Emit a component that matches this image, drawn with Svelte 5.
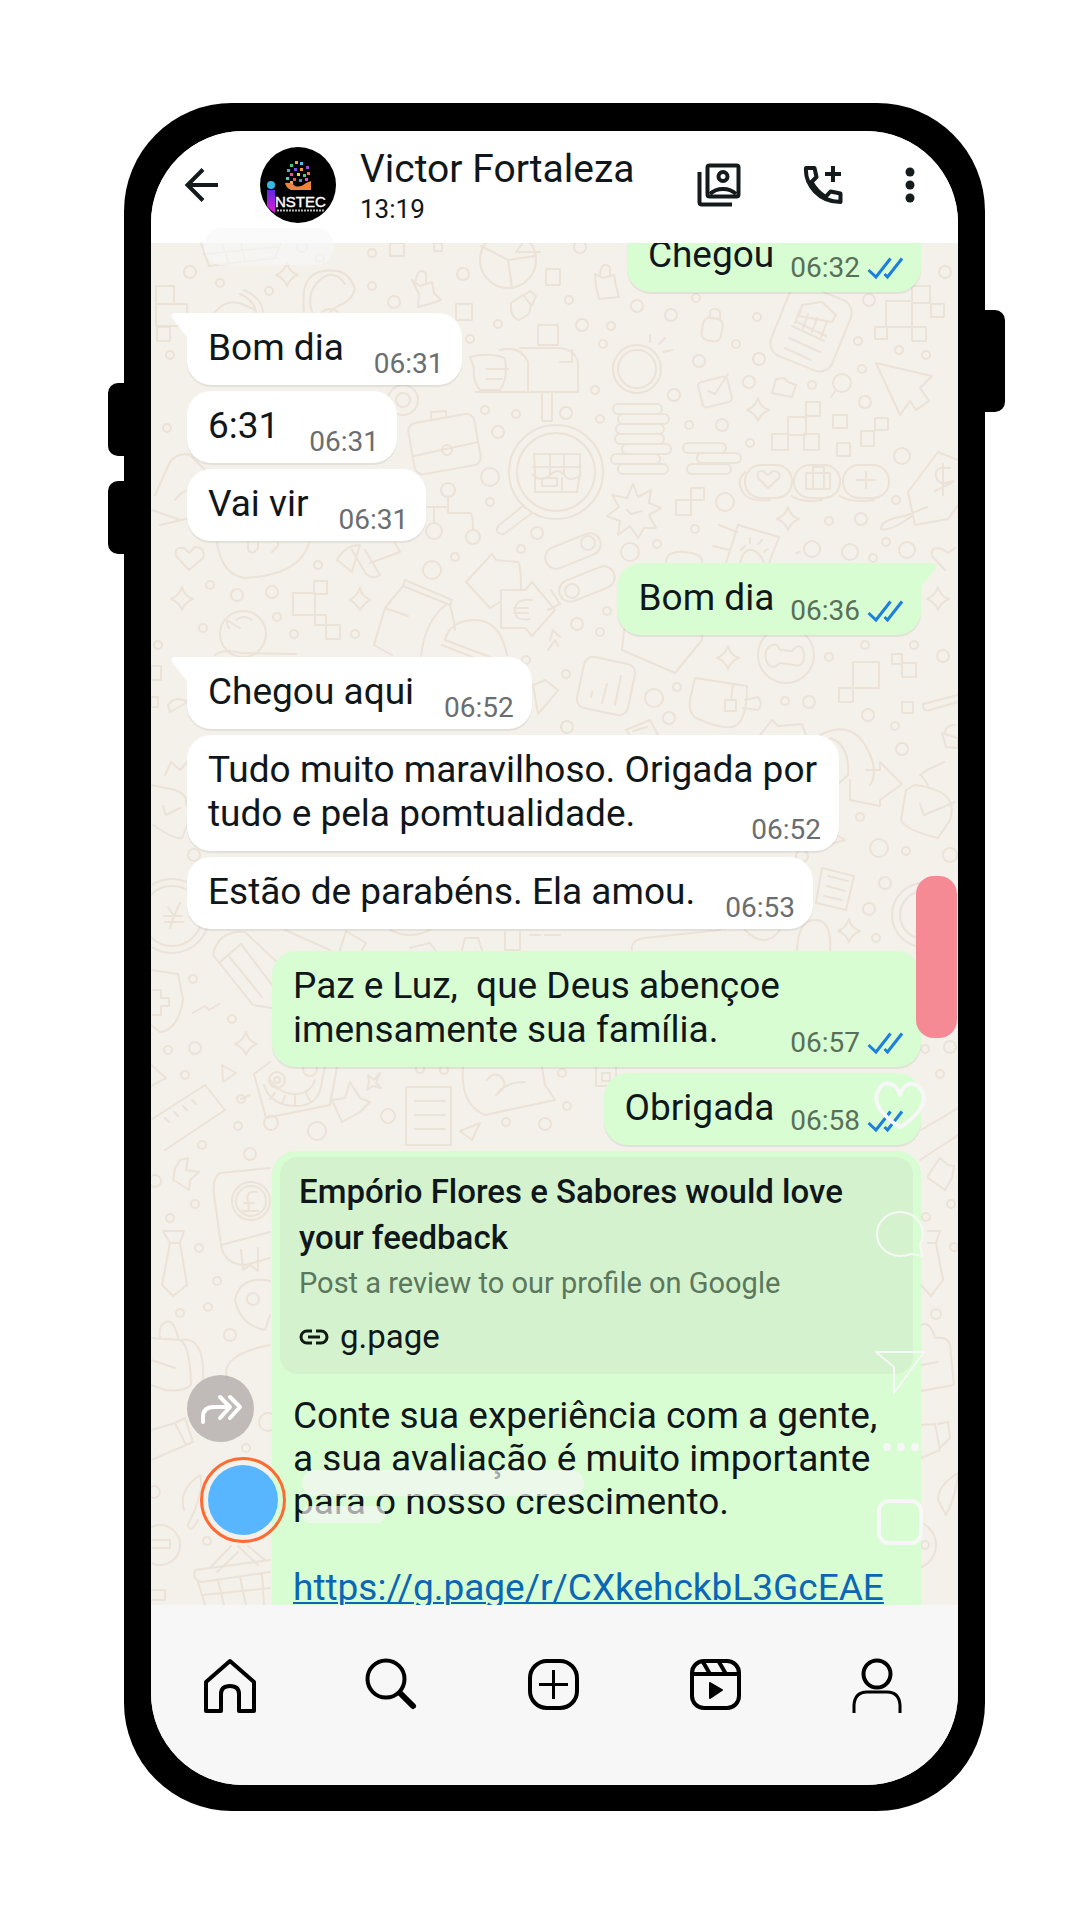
<script>
  const messages = [
    { side: 'out', last: 'Chegou', time: '06:32', first: true },
    { side: 'in', last: 'Bom dia', time: '06:31', tail: true },
    { side: 'in', last: '6:31', time: '06:31' },
    { side: 'in', last: 'Vai vir', time: '06:31' },
    { side: 'out', last: 'Bom dia', time: '06:36', tail: true },
    { side: 'in', last: 'Chegou aqui', time: '06:52', tail: true },
    { side: 'in', head: 'Tudo muito maravilhoso. Origada por', last: 'tudo e pela pomtualidade.', time: '06:52' },
    { side: 'in', last: 'Estão de parabéns. Ela amou.', time: '06:53' },
    { side: 'out', head: 'Paz e Luz,  que Deus abençoe', last: 'imensamente sua família.', time: '06:57', gap: true, wide: true },
    { side: 'out', last: 'Obrigada', time: '06:58' }
  ];

  const review = 'Conte sua experiência com a gente,\na sua avaliação é muito importante\npara o nosso crescimento.\n\n';

  // Wallpaper doodles: [x, y, radius]
  const rings = [
    [190,272,6],[220,283,4],[269,291,4],[372,253,4],[394,302,6],[372,286,4],[463,274,6],[498,324,4],[470,339,4],[170,355,4],[320,258,4],[302,247,5],
    [580,247,6],[569,300,4],[637,306,6],[671,315,6],[582,325,6],[611,326,4],[603,344,4],[696,298,4],[757,317,4],[736,344,4],[699,361,6],[759,359,6],[749,382,6],
    [812,385,4],[862,369,4],[858,341,4],[899,350,4],[926,355,4],[869,300,6],[945,272,6],[865,402,6],[595,390,4],[566,413,6],[600,419,4],[674,395,6],[637,369,24],[637,369,19],
    [689,425,4],[722,425,6],[842,383,9],[485,410,4],[516,414,4],[403,400,15],[403,400,7],[498,432,6],[490,477,9],[448,490,7],[434,531,8],[473,537,7],[490,502,4],
    [455,557,4],[432,570,9],[537,533,6],[521,549,4],[318,565,4],[210,585,4],[237,595,6],[272,592,6],[277,617,4],[203,628,4],[294,634,4],[355,634,4],[158,645,4],[243,634,23],
    [526,660,4],[167,428,4],[556,472,47],[556,472,39],[750,443,4],[902,456,8],[896,500,4],[861,519,6],[829,521,4],[725,502,9],[695,529,4],[657,544,4],[630,552,9],
    [812,549,8],[850,552,8],[907,550,8],[886,542,4],[873,558,4],[588,543,7],[572,591,7],[607,611,4],[577,624,6],[600,632,4],[566,674,4],[654,698,9],
    [677,687,4],[669,718,6],[567,727,6],[785,701,4],[809,702,6],[829,657,4],[865,645,4],[914,645,4],[943,656,6],[868,715,6],[895,726,4],[902,749,6],
    [786,655,28],[860,817,4],[879,848,9],[906,851,4],[950,855,7],[802,856,6],[885,883,6],[869,909,6],[876,938,4],[924,915,32],[924,915,24],[194,855,6],
    [172,916,37],[172,916,30],[193,979,4],[232,1019,4],[168,1050,4],[195,1048,6],[185,1075,4],[241,1099,4],[271,1123,7],[317,1131,9],[388,1116,7],[238,1126,4],
    [277,1080,8],[277,1080,3],[310,1069,7],[420,1069,4],[444,1070,4],[506,1122,4],[545,1124,6],[562,1073,4],[567,1106,4],[545,1163,4],[925,1049,4],[940,1074,4],[950,1047,6],
    [250,1154,6],[202,1145,4],[155,1181,6],[195,1204,4],[170,1218,4],[199,1248,4],[217,1281,4],[208,1307,4],[180,1313,4],[230,1335,6],[251,1201,19],[251,1201,15],[253,1299,6],
    [246,1448,4],[207,1541,4],[154,1492,6],[160,1545,20],[268,1422,9],[951,1204,4],[936,1314,5],[954,1247,4],[926,1217,4],[912,1545,24],[925,1545,4]
  ];
  // [x, y, width, height]
  const boxes = [
    [390,243,14,13],[156,286,18,18],[156,304,31,22],[157,327,13,14],[434,243,8,8],[456,304,16,16],[538,325,20,20],[546,269,14,16],
    [886,301,26,26],[912,286,18,17],[912,327,14,14],[931,304,13,13],[875,327,12,12],
    [788,417,18,18],[806,402,14,14],[833,415,14,13],[772,434,16,16],[804,434,15,16],[875,418,13,12],[861,431,13,15],[837,443,13,13],
    [676,500,15,15],[691,488,13,12],[293,593,22,22],[314,581,13,13],[315,615,11,10],[326,625,14,14],[151,666,10,14],[151,697,7,10],
    [853,662,26,26],[839,688,14,14],[892,654,10,10],[902,663,14,14],[902,702,11,11],[596,1066,20,20],[602,1073,8,8]
  ];
  const books = [
    [613,404,49],[618,414,51],[616,424,48],[615,434,49],[622,444,49],[611,454,49],[618,464,50],
    [683,443,43],[697,453,44],[687,464,44]
  ];
  const sparkles = [[287,275],[758,410],[182,599],[360,600],[788,519],[938,599],[728,658],[849,931],[246,1044]];

  const nav = ['home', 'search', 'create', 'reels', 'profile'];
  const navLabels = { home: 'Início', search: 'Pesquisar', create: 'Criar', reels: 'Reels', profile: 'Perfil' };
</script>

{#snippet ticks()}
  <svg class="ticks" viewBox="0 0 36 24" aria-hidden="true">
    <path d="M1.500 14L9 21L23.500 2.500M17.500 18L20.500 21L35 2.500" />
  </svg>
{/snippet}

<main class="page">
  <div class="phone">
    <span class="key key-up"></span>
    <span class="key key-down"></span>
    <span class="key key-power"></span>

    <div class="screen">
      <header class="top">
        <button class="icon-btn back" aria-label="Voltar">
          <svg width="36" height="36" viewBox="0 0 36 36"><path d="M34 18H4M19 2.500L3.500 18L19 33.500" fill="none" stroke="#151a1c" stroke-width="4" /></svg>
        </button>
        <svg class="avatar" viewBox="0 0 76 76" role="img" aria-label="INSTEC">
          <defs>
            <linearGradient id="stem" x1="0" y1="0" x2="0" y2="1">
              <stop offset="0" stop-color="#5a2be0" /><stop offset="1" stop-color="#e619d8" />
            </linearGradient>
          </defs>
          <circle cx="38" cy="38" r="38" fill="#000" />
          <g>
            <rect x="35" y="14" width="3" height="3" fill="#f3a53a" /><rect x="40" y="15" width="3" height="3" fill="#47c6e8" />
            <rect x="30" y="17" width="3" height="3" fill="#4bc48a" /><rect x="46" y="19" width="3" height="3" fill="#a04be0" />
            <rect x="27" y="22" width="3" height="3" fill="#38b3df" /><rect x="34" y="21" width="3" height="3" fill="#7b4de8" />
            <rect x="40" y="21" width="3" height="3" fill="#f0a330" /><rect x="47" y="25" width="3" height="3" fill="#ef7b3b" />
            <rect x="30" y="26" width="3" height="3" fill="#e8567c" /><rect x="37" y="26" width="3" height="3" fill="#f3d63a" />
            <rect x="43" y="27" width="3" height="3" fill="#58cf62" /><rect x="26" y="30" width="3" height="3" fill="#54d0b8" />
            <rect x="33" y="31" width="3" height="3" fill="#ee5454" /><rect x="39" y="32" width="3" height="3" fill="#4e8cf0" />
            <rect x="45" y="31" width="3" height="3" fill="#e44ed0" /><rect x="30" y="34" width="3" height="3" fill="#f3a53a" />
          </g>
          <path d="M25 36Q31 35 35 39Q40 41 46 36L51 34V43H31Q26 41 25 36Z" fill="#ee8340" />
          <circle cx="11" cy="38" r="4" fill="#35b9e8" />
          <path d="M7 43H15V66Q11 64 7 59Z" fill="url(#stem)" />
          <text x="15" y="60" class="logo-text">NSTEC</text>
          <path d="M17 63.500H64" stroke="#b9b9b9" stroke-width="2" stroke-dasharray="2 1" />
        </svg>
        <div class="who">
          <h1>Victor Fortaleza</h1>
          <p>13:19</p>
        </div>
        <div class="actions">
          <button class="icon-btn" aria-label="Contato">
            <svg width="44" height="44" viewBox="0 0 44 44" fill="none" stroke="#151a1c" stroke-width="4">
              <rect x="10.500" y="2.500" width="31" height="31" rx="2" />
              <path d="M2.500 9V39Q2.500 41.500 5 41.500H35" />
              <circle cx="26" cy="13.500" r="4.500" />
              <path d="M13 31Q18 26 26 26T39 31" />
            </svg>
          </button>
          <button class="icon-btn" aria-label="Ligar">
            <svg width="40" height="40" viewBox="0 0 40 40" fill="none" stroke="#151a1c" stroke-width="4" stroke-linejoin="round">
              <path d="M3 3H11.500L13.500 12L8.500 17Q13.500 26.500 22.500 32L27.500 26.500L37.500 28.500V37Q22 37 12 26.500T3 3Z" />
              <path d="M30 1V17M22 9H38" />
            </svg>
          </button>
          <button class="icon-btn" aria-label="Mais opções">
            <svg width="10" height="36" viewBox="0 0 10 36" fill="#151a1c"><circle cx="5" cy="5" r="4.500" /><circle cx="5" cy="18" r="4.500" /><circle cx="5" cy="31" r="4.500" /></svg>
          </button>
        </div>
      </header>

      <section class="chat" aria-label="Conversa">
        <svg class="doodles" viewBox="151 243 807 1362" preserveAspectRatio="xMinYMin slice" aria-hidden="true">
          {#each rings as [x, y, r]}<circle cx={x} cy={y} {r} />{/each}
          {#each boxes as [x, y, w, h]}<rect {x} {y} width={w} height={h} />{/each}
          {#each books as [x, y, w]}<rect {x} {y} width={w} height="10" rx="5" />{/each}
          {#each sparkles as [x, y]}
            <path transform="translate({x} {y})" d="M0-12Q2-3 11 0Q3 3 0 11Q-3 3-11 0Q-3-3 0-12Z" />
          {/each}
          <!-- basket, taco, wifi, pie, locks -->
          <path d="M201 243L209 266L275 258L281 243M222 243L229 264M241 243L245 261M204 254L278 247" />
          <path d="M304 312Q302 292 306 284Q312 268 338 271Q350 274 355 289Q352 301 338 306L330 312M312 312Q306 292 320 280T345 284M322 312Q330 306 338 312" />
          <path d="M215 312Q227 298 242 304T256 312M240 294Q254 300 256 312M244 290Q262 298 263 312" />
          <circle cx="508" cy="260" r="28" /><path d="M481 246L508 260L512 288M508 260L535 256M516 252L523 243M516 252H540" />
          <path d="M412 280L420 286L432 282L434 293L441 300L429 304L418 307L419 294ZM416 280Q418 267 426 273V282" />
          <path d="M511 303L523 295L531 305L529 314L519 320Q510 318 511 303ZM524 295L530 291L536 296L532 305" />
          <path d="M595 274L603 278L614 275L616 286L619 297L599 299L596 286ZM600 274Q602 260 610 267V275" />
          <rect x="702" y="318" width="20" height="23" rx="7" transform="rotate(10 712 330)" /><path d="M710 318V311Q716 306 720 312V320" />
          <!-- bank card, cursor, coin rays -->
          <rect x="778" y="290" width="66" height="76" rx="14" transform="rotate(22 811 328)" />
          <path d="M799 316L802 305L822 302L836 315L832 322ZM797 322L826 336M792 326L824 341M800 309L795 323M808 314L803 328M817 318L812 332M827 322L821 337M789 338L820 352M785 348L811 360" />
          <path d="M876 363L932 376L920 388L929 401L916 410L910 401L900 415Z" />
          <path d="M650 342V335M659 344L665 338M663 352L672 350" />
          <rect x="700" y="379" width="30" height="26" rx="4" transform="rotate(-14 715 392)" /><path d="M708 391L715 394L728 374" />
          <path d="M772 393L776 379L784 378L788 382L796 385L792 397ZM835 391L831 397" />
          <!-- mailbox and speech bubble -->
          <path d="M470 357Q490 352 505 358Q508 380 500 390H480Q472 380 474 368ZM486 369H508M486 379H502M500 350Q520 345 528 362V392H475M520 348H560Q575 350 578 362V392H528M542 393V421H552V393M560 362H572V350" />
          <!-- briefcase, nodes, store lens -->
          <rect x="411" y="418" width="67" height="52" rx="8" transform="rotate(-10 445 444)" /><path d="M414 456L478 442M431 418V412L446 411V415" /><circle cx="447" cy="450" r="5" />
          <path d="M448 498V513H470Q473 513 473 530M425 507H448M434 507V523" />
          <path d="M534 454H580V473L577 492H535V474ZM533 467H581M550 454V474M564 454V474M533 475Q542 483 550 475T564 475T581 475M542 478H557V486H542ZM562 478V492M524 505L498 526Q494 534 504 534L532 513" />
          <path d="M633 484L638 497L651 490L649 503L661 508L649 515L656 528L644 528L638 538L630 526L618 535L620 521L607 516L619 507L612 495L627 498ZM627 510L631 514L642 511" />
          <!-- reaction pills -->
          <rect x="745" y="465" width="47" height="33" rx="16" /><rect x="794" y="465" width="46" height="33" rx="16" /><rect x="843" y="465" width="46" height="33" rx="16" />
          <path d="M745 472Q735 482 744 494Q750 502 770 500M792 496Q800 503 822 500M840 496Q850 503 874 500M768 488L758 478Q756 470 763 471L768 475L773 471Q781 471 779 478ZM806 473H830V489H806ZM813 473V467H824V473M813 473V489M824 473V489M866 472V488M857 480H875" />
          <path d="M958 460L938 452L908 492L915 525L948 519L958 505M950 468Q934 466 936 476T950 482T935 491M943 464V495M927 507L905 516Q880 520 881 529Q890 532 912 516" />
          <!-- toggles, paw card, scribbles -->
          <rect x="544" y="540" width="58" height="22" rx="11" transform="rotate(-22 573 551)" /><rect x="558" y="573" width="58" height="22" rx="11" transform="rotate(-22 587 584)" />
          <path d="M726 563L738 525L779 537L769 563M713 546L730 550M719 525L737 532M740 563Q744 548 752 550T764 563M741 550L745 546M750 543V538M758 544L762 540M764 552L768 549M800 552L796 553M666 563Q666 550 685 552T702 563" />
          <path d="M189 570L176 556Q174 546 184 548L189 553L195 547Q206 547 203 558ZM945 570L932 556Q930 546 942 549L948 553L955 548" />
          <path d="M155 495L170 462Q178 452 190 455L205 470M160 525L190 518M152 510L180 520M175 500Q190 480 205 500" />
          <path d="M217 543Q222 575 245 578Q300 575 309 543M248 543V550Q253 556 258 548V543M272 552Q280 545 278 543M337 560Q345 545 360 545L352 572ZM365 550L380 575Q374 580 366 574L352 550M395 543L400 552L370 563" />
          <path d="M466 582L492 554L496 560L518 562Q521 565 521 590M466 582L490 608L500 602M501 590H525L532 582L555 610L532 636L525 628H501ZM532 600Q515 598 515 610T530 619M514 608H528M514 613H528" />
          <path d="M405 580L452 600L450 605L403 586ZM403 586L385 608L374 645L392 655M385 608L408 616M450 605Q454 620 455 630M447 604Q425 620 421 656M445 640Q450 620 475 620T507 655M445 640L490 657M442 645L480 660" />
          <path d="M229 628Q224 618 230 622T240 628M236 620Q244 614 252 620M215 655Q225 648 240 653L296 654M548 650L555 640L558 646M548 610L560 604L551 590" />
          <path d="M624 630L622 650L675 673L702 640V634M550 640L553 630L560 637" />
          <rect x="580" y="660" width="52" height="52" rx="9" transform="rotate(12 606 686)" /><path d="M591 697L592 692M602 703L607 684M615 705L621 676" />
          <path d="M695 678L747 686Q747 715 738 724T696 718Q688 712 690 700ZM745 700L758 697Q764 704 758 710L743 708M733 684L731 700M725 700H736V711H725ZM626 730L650 720L658 735M626 730L630 735M633 731L647 727" />
          <path d="M768 648Q776 640 780 650L792 651Q802 640 804 655Q804 668 794 665L780 663Q770 672 766 660Q764 652 768 648Z" />
          <path d="M923 704L958 695M923 704Q922 712 930 710L958 702M945 733Q945 725 955 725M942 733L958 738V748L946 747ZM168 705Q175 695 188 702L170 712ZM533 685L545 680L558 690L550 700L538 714ZM760 735L772 720L778 726L802 724L806 735" />
          <path d="M820 735Q850 720 865 745T870 785M830 738Q850 745 848 775L838 784M850 780V800L880 806V800L902 784L880 762V770H866M812 850L845 840L828 830" />
          <path d="M920 775L927 770L944 762M921 775L928 785M906 790L914 785Q960 790 950 820L938 838Q905 830 901 820ZM920 804L924 815L955 802" />
          <path d="M822 868L854 876L846 910L816 903ZM828 876L848 881M827 886L845 891M824 896L842 900" />
          <path d="M151 785L175 790Q188 794 186 805M153 825Q175 840 182 838L189 820M163 806L166 815L180 808M165 775L171 762L180 770L187 762" />
          <!-- pencil, shield, ruler, robot -->
          <path d="M213 955Q218 930 245 932L280 965M213 955L253 1005L272 1008M228 955L262 997M241 944L272 985M220 962L241 944" />
          <path d="M151 970L178 974L183 1000Q178 1030 160 1032L151 1025M153 990H161V998H169V1006H161V1015H153M193 1013L205 1006L209 1010L219 1004M168 907L174 916L180 903M164 916H182M165 922H183M174 916L170 928" />
          <path d="M222 1065L236 1073L223 1082ZM151 1065L166 1078L151 1086M151 1120L205 1085L225 1110L165 1150M165 1118L169 1122M174 1112L178 1116M183 1106L187 1110M192 1100L196 1104" />
          <path d="M254 1074L270 1062M254 1074L266 1118L330 1105L337 1067M264 1085Q270 1105 295 1106T322 1080L325 1067M270 1080Q280 1094 295 1094T315 1080M275 1093L270 1099M285 1096L282 1104M295 1096V1105M306 1093L310 1101M241 1099L250 1095" />
          <path d="M350 1082L360 1098L370 1102L360 1112L342 1122L332 1100L345 1098ZM368 1075L374 1080L380 1073L376 1083L381 1088L373 1086L367 1090L369 1082Z" />
          <path d="M406 1087H451V1145H406ZM415 1101H445M415 1115H445M415 1129H445M463 1067Q460 1105 485 1115L555 1100L545 1085L542 1067M487 1080Q495 1070 502 1078T496 1095Q505 1082 525 1082M460 1131L480 1123L472 1140Z" />
          <path d="M285 930L330 950M340 950L346 931L366 943L362 950M390 930Q410 940 430 930M410 948L430 943L435 950M462 950L465 938H478L482 950M505 932V950H520V932M530 935H540M545 935H560M632 950Q630 940 645 938L720 930M745 930Q765 950 780 930M797 950Q798 920 815 920T830 950" />
          <!-- books, tie, pin, backpack -->
          <path d="M270 1168L220 1173Q212 1178 214 1195L221 1245Q225 1265 245 1265L270 1258M221 1245L270 1232M241 1250L243 1270L250 1265L258 1271L258 1248M257 1192Q245 1190 248 1202T243 1211H258M244 1203H254" />
          <path d="M163 1231H184L180 1243H170ZM170 1243L162 1285L173 1296L187 1285L180 1243M270 1281Q240 1275 235 1300Q240 1325 265 1330L270 1315M175 1168L180 1160L188 1158L186 1170L199 1172L190 1180L189 1190L180 1184L173 1180Z" />
          <path d="M151 1338L180 1340Q190 1345 191 1385Q185 1392 165 1390L151 1385M160 1338Q158 1325 166 1322T178 1338M151 1360L175 1368M180 1340Q205 1335 203 1380M227 1378Q220 1355 270 1345" />
          <path d="M151 1430L175 1423L186 1445L151 1460M175 1423L185 1418L193 1442L186 1445M184 1510Q178 1490 200 1475Q205 1490 188 1525M188 1525Q190 1535 198 1520M151 1548H170V1540H151M210 1568L231 1546M217 1572L238 1552M238 1546L258 1565M248 1546L265 1560" />
          <path d="M195 1570L270 1560M195 1570Q192 1580 202 1582L270 1572M198 1582L205 1605M218 1580L224 1605M240 1577L246 1605M262 1573L264 1605M203 1595L270 1588M151 1590H165V1600H151" />
          <path d="M928 1231H940L936 1243H928M936 1243L943 1280L931 1296L921 1285M928 1176L935 1165L940 1158L948 1165L954 1166L952 1178L945 1190L928 1178M921 1325Q930 1320 935 1338Q948 1336 950 1345L954 1385L921 1391M921 1365L938 1362M921 1425L935 1424L940 1450L921 1458M938 1424L948 1422L950 1438L940 1448M958 1473Q938 1485 938 1500L946 1515Q956 1495 958 1475M920 1160L958 1135M921 1130L958 1108" />
        </svg>

        <ol class="messages">
          {#each messages as m}
            <li class="bubble {m.side}" class:tail={m.tail} class:gap={m.gap} class:first={m.first} class:wide={m.wide}>
              <p class="lines">{#if m.head}<span class="text head">{m.head}</span>{/if}<span class="text last">{m.last}</span></p>
              <span class="meta"><time>{m.time}</time>{#if m.side === 'out'}{@render ticks()}{/if}</span>
            </li>
          {/each}
          <li class="bubble out wide card">
            <div class="preview">
              <h2>Empório Flores e Sabores would love<br />your feedback</h2>
              <p class="sub">Post a review to our profile on Google</p>
              <p class="host">
                <svg width="30" height="16" viewBox="0 0 30 16" fill="none" stroke="#101a14" stroke-width="3" aria-hidden="true"><path d="M13 2H8A6 6 0 0 0 8 14H13M17 2H22A6 6 0 0 1 22 14H17M9 8H21" /></svg>
                g.page
              </p>
            </div>
            <p class="text review">{review}<a href="https://g.page/r/CXkehckbL3GcEAE">https://g.page/r/CXkehckbL3GcEAE</a></p>
          </li>
        </ol>

        <button class="forward" aria-label="Encaminhar">
          <svg width="44" height="32" viewBox="0 0 44 32" fill="none" stroke="#fff" stroke-width="4" stroke-linecap="round" stroke-linejoin="round"><path d="M4 29V24Q4 14 15 14H29M21 4L31 14L21 25M31 4L41 14L31 25" /></svg>
        </button>
        <span class="story"></span>
        <span class="ghost ghost-a"></span>
        <span class="ghost ghost-b"></span>
        <span class="marker"></span>

        <div class="rail">
          <button class="icon-btn" aria-label="Curtir">
            <svg width="52" height="48" viewBox="0 0 52 48" stroke-width="4"><path d="M26 46Q18 42 8 31Q-1 20 4 10T16 3Q23 4 26 14Q29 4 36 3T48 10Q53 20 44 31Q34 42 26 46Z" /></svg>
          </button>
          <button class="icon-btn comment" aria-label="Comentar">
            <svg width="52" height="48" viewBox="0 0 52 48" stroke-width="2"><path d="M48 47L37 45Q32 47 26 47A23 22 0 1 1 49 25Q49 30 46 35Z" /></svg>
          </button>
          <button class="icon-btn send" aria-label="Enviar">
            <svg width="52" height="46" viewBox="0 0 52 46" stroke-width="2"><path d="M2 2H50L20 43V17Z" /></svg>
          </button>
          <button class="icon-btn more" aria-label="Mais">
            <svg width="52" height="10" viewBox="0 0 52 10"><g fill="#f7f7f7" stroke="none"><circle cx="13" cy="5" r="4" /><circle cx="27" cy="5" r="4" /><circle cx="41" cy="5" r="4" /></g></svg>
          </button>
          <button class="icon-btn sound" aria-label="Áudio">
            <svg width="52" height="48" viewBox="0 0 52 48" stroke-width="4"><rect x="5" y="3" width="42" height="42" rx="10" /></svg>
          </button>
        </div>
      </section>
      <span class="ghost ghost-top"></span>

      <nav class="bottom" aria-label="Principal">
        {#each nav as id}
          <button class="icon-btn" aria-label={navLabels[id]}>
            <svg width="56" height="56" viewBox="0 0 56 56" fill="none" stroke="#000" stroke-width="4" stroke-linejoin="round">
              {#if id === 'home'}
                <path d="M26 4L50 25V54H35V37Q35 29 26 29T17 37V54H2V25Z" />
              {:else if id === 'search'}
                <circle cx="21" cy="22" r="18.500" /><path d="M35 36L48 49" stroke-width="6" stroke-linecap="round" />
              {:else if id === 'create'}
                <rect x="4" y="4" width="47" height="47" rx="17" /><path d="M13 27.500H42M27.500 13V42" stroke-width="3" />
              {:else if id === 'reels'}
                <rect x="4" y="4" width="47" height="47" rx="12" /><path d="M4 17H51M15 5L22 17M31 5L38 17" /><path d="M22 26L34 33L22 41Z" fill="#000" stroke-width="2" />
              {:else}
                <circle cx="28" cy="17" r="13.500" /><path d="M5 56V48Q6 35 18 35H38Q50 35 51 48V56" stroke-width="3" />
              {/if}
            </svg>
          </button>
        {/each}
      </nav>
    </div>
  </div>
</main>

<style>
  :global(body) { background: #fff; }
  * { box-sizing: border-box; }
  h1, h2, p, ol { margin: 0; padding: 0; font-weight: 400; }
  .page {
    padding: 103px 95px 109px 124px;
    font-family: Roboto, "Noto Sans", sans-serif;
    color: #10171a;
  }
  .phone {
    position: relative;
    padding: 28px 27px 26px;
    background: #000;
    border-radius: 108px;
  }
  .key { position: absolute; background: #000; }
  .key-up, .key-down { left: -16px; width: 20px; height: 73px; border-radius: 10px 0 0 10px; }
  .key-up { top: 280px; }
  .key-down { top: 378px; }
  .key-power { right: -20px; top: 207px; width: 24px; height: 102px; border-radius: 0 10px 10px 0; }
  .screen {
    position: relative;
    overflow: hidden;
    border-radius: 92px;
    background: #f7f7f7;
  }
  .icon-btn {
    display: flex;
    align-items: center;
    justify-content: center;
    padding: 0;
    border: 0;
    background: none;
  }
  .top {
    display: flex;
    align-items: center;
    height: 112px;
    padding: 0 43px 4px 33px;
    background: #fff;
  }
  .avatar { width: 76px; height: 76px; margin-left: 40px; flex: none; }
  .logo-text { font: 15px "Liberation Sans", sans-serif; fill: #fff; stroke: #fff; stroke-width: 0.4; }
  .who { margin-left: 24px; flex: 1; }
  .who h1 { font-size: 39px; line-height: 48px; }
  .who p { font-size: 26px; line-height: 32px; }
  .actions { display: flex; align-items: center; gap: 62px; }
  .chat {
    position: relative;
    height: 1362px;
    overflow: hidden;
    background: #f4f1ea;
  }
  .doodles {
    position: absolute;
    inset: 0;
    width: 100%;
    height: 100%;
    fill: none;
    stroke: #ebe2d8;
    stroke-width: 2;
    stroke-linejoin: round;
    stroke-linecap: round;
  }
  .messages {
    position: relative;
    display: flex;
    flex-direction: column;
    gap: 6px;
    padding: 0 37px 0 36px;
    list-style: none;
  }
  .bubble {
    position: relative;
    display: grid;
    grid-template-columns: auto auto;
    padding: 13px 18px 7px 21px;
    border-radius: 24px;
    box-shadow: 0 2px 1px #00000012;
  }
  .in { align-self: flex-start; column-gap: 30px; background: #fff; }
  .out { align-self: flex-end; column-gap: 16px; background: #d8fdd2; }
  .first { margin-top: -23px; margin-bottom: -1px; }
  .tail, .gap { margin-top: 16px; }
  .in.tail { border-top-left-radius: 0; }
  .out.tail { border-top-right-radius: 0; }
  .tail::before {
    content: "";
    position: absolute;
    top: 0;
    width: 16px;
    height: 24px;
    background: inherit;
  }
  .in.tail::before { right: 100%; clip-path: path("M3 0H16V24L1 5Q-1 1 3 0Z"); }
  .out.tail::before { left: 100%; clip-path: path("M13 0H0V24L15 5Q17 1 13 0Z"); }
  .lines { display: contents; }
  .text { font-size: 37px; line-height: 44px; white-space: pre-wrap; }
  .head { grid-column: 1 / -1; padding-right: 4px; }
  .last { padding-bottom: 8px; }
  .meta {
    display: flex;
    align-items: center;
    justify-self: end;
    align-self: end;
    gap: 7px;
    font-size: 28px;
    line-height: 28px;
    color: #6a6e70;
  }
  .out .meta { padding-bottom: 3px; color: #587059; }
  .ticks { width: 36px; height: 24px; fill: none; stroke: #1c7fe0; stroke-width: 3; }
  .wide { align-self: stretch; margin-left: 85px; }
  .card { display: block; padding: 6px 8px 60px; }
  .review { padding: 20px 0 0 13px; line-height: 43px; }
  .preview { padding: 12px 19px 11px; border-radius: 18px; background: #d4f2cd; }
  .preview h2 { font-size: 33px; line-height: 46px; font-weight: 500; }
  .sub { font-size: 29px; line-height: 44px; color: #5b775d; }
  .host { display: flex; align-items: center; gap: 11px; padding: 10px 0 4px; font-size: 33px; line-height: 44px; }
  a { color: #0b66b5; text-decoration: underline; text-decoration-thickness: 2px; text-underline-offset: 2px; }
  .forward {
    position: absolute;
    left: 36px;
    top: 1132px;
    display: flex;
    align-items: center;
    justify-content: center;
    width: 67px;
    height: 67px;
    padding: 0;
    border: 0;
    border-radius: 50%;
    background: #9c989899;
  }
  .story {
    position: absolute;
    left: 49px;
    top: 1214px;
    width: 86px;
    height: 86px;
    padding: 5px;
    border: 3px solid #ff6a33;
    border-radius: 50%;
    background: #58b5ff content-box;
  }
  .ghost { position: absolute; background: #f7f7f7a6; }
  .ghost-a { left: 151px; top: 1227px; width: 282px; height: 26px; border-radius: 13px; }
  .ghost-b { left: 151px; top: 1263px; width: 83px; height: 17px; border-radius: 8px; }
  .ghost-top { left: 53px; top: 97px; width: 130px; height: 37px; border-radius: 18px; }
  .marker {
    position: absolute;
    right: 1px;
    top: 633px;
    width: 41px;
    height: 162px;
    border-radius: 18px;
    background: #f58a94;
  }
  .rail {
    position: absolute;
    right: 32px;
    top: 838px;
    display: flex;
    flex-direction: column;
  }
  .rail svg { fill: none; stroke: #f7f7f7; stroke-linejoin: round; }
  .comment { margin-top: 80px; }
  .send { margin-top: 93px; }
  .more, .sound { margin-top: 46px; }
  .bottom {
    display: grid;
    grid-template-columns: repeat(5, 1fr);
    align-items: start;
    height: 180px;
    padding-top: 52px;
    background: #f7f7f7;
  }
</style>
